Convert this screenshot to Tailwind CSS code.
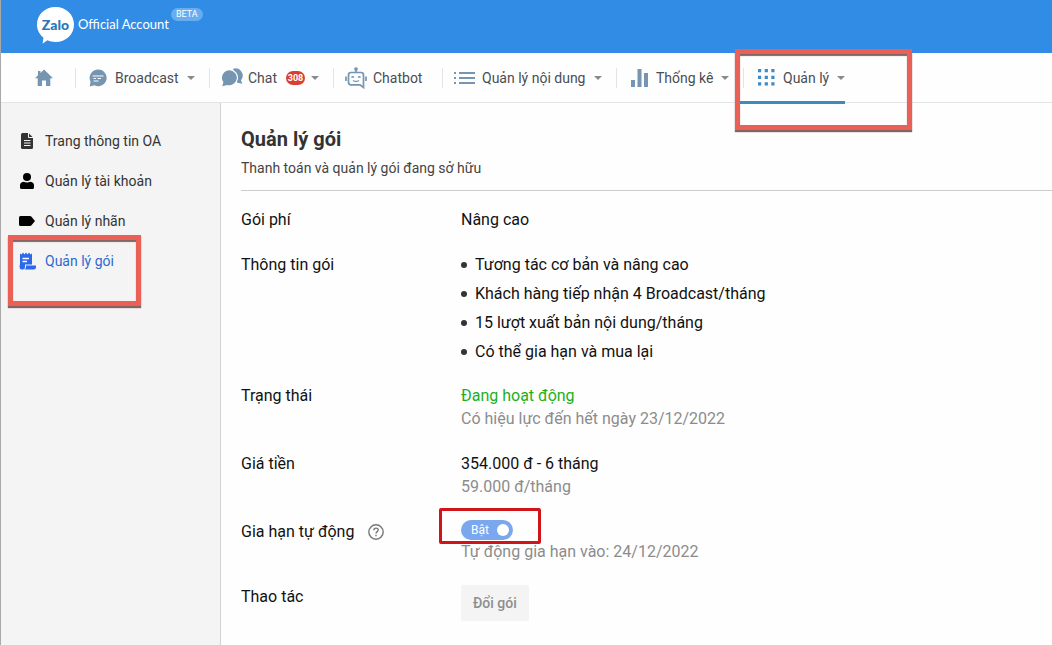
<!DOCTYPE html>
<html lang="vi">
<head>
  <meta charset="UTF-8" />
  <meta name="viewport" content="width=device-width, initial-scale=1.0"/>
  <title>Quản lý gói - Zalo Official Account</title>
  <script src="https://cdn.jsdelivr.net/npm/@tailwindcss/browser@4"></script>
</head>
<body class="relative flex flex-col min-h-screen overflow-x-hidden bg-[#fefefe] border-l border-[#a9a9a9] font-['Roboto',sans-serif] text-sm text-[#4a4d52]">

  <!-- Header -->
  <header class="flex items-start h-[53px] pl-9 pt-1.5 bg-[#308ce4] text-white">
    <a href="#" class="flex items-start" aria-label="Zalo Official Account">
      <svg class="w-[38px] h-[38px]" viewBox="0 0 38 38">
        <path d="M18.500 1C29 1 37 8.500 37 18.500S29 36 18.500 36C15.500 36 12.800 35.400 10.400 34.300L5.500 37.800 6.500 31.700C2.500 28.500 0 24 0 18.500 0 8.500 8 1 18.500 1Z" fill="#fff"/>
        <text x="18.500" y="24" text-anchor="middle" font-family="Lato, sans-serif" font-weight="900" font-size="14" fill="#2c76b8">Zalo</text>
      </svg>
      <span class="ml-[3px] mt-2 font-['Lato',sans-serif] text-[13px] leading-5">Official Account</span>
    </a>
    <span class="ml-0.5 mt-0.5 px-[5px] h-[13px] rounded-full bg-[#67adf0] text-[9px] leading-[13px]">BETA</span>
  </header>

  <!-- Top menu -->
  <nav class="flex items-center h-[50px] shrink-0 border-b border-[#e2e4e6] text-[#4a4d52]">
    <a href="#" aria-label="Trang chủ" class="flex items-center w-[74px] shrink-0 pl-[34px]">
      <svg class="w-[18px] h-[18px]" viewBox="0 0 18 18" fill="#7595b0"><path d="M9 .500 18 9.200H15.300V17H11V11.500H7V17H2.700V9.200H0L3 6.200V2H5.500V3.900Z"/></svg>
    </a>
    <button class="flex items-center w-[134px] h-5 shrink-0 border-l border-[#e2e4e6] pl-[13px]">
      <svg class="w-[18px] h-[18px] mr-2" viewBox="0 0 18 18"><path d="M9.200 .500A8.500 8.300 0 1 1 5.500 16.300L.800 17.500 1.500 12.500A8.500 8.300 0 0 1 9.200 .500Z" fill="#7595b0"/><path d="M3.500 7H14.500M4.500 9.500H7M8.500 9.500H12M4.500 12H9.500" stroke="#fff" stroke-width="1.200"/></svg>
      <span>Broadcast</span>
      <span class="ml-auto mr-3.5 border-x-4 border-x-transparent border-t-4 border-t-[#878b90]"></span>
    </button>
    <button class="flex items-center w-[124px] h-5 shrink-0 border-l border-[#e2e4e6] pl-3">
      <svg class="w-[21px] h-[19px] mr-[5px]" viewBox="0 0 21 19" fill="#7595b0"><path d="M11 .800A7.300 7.300 0 0 1 19 12.300L20.300 15.800 15.300 14.800 13 8Z"/><path d="M7.800 2.200A7.800 7.500 0 1 1 5 16.900L.300 18.300 1.400 14A7.800 7.500 0 0 1 7.800 2.200Z" stroke="#fefefe" stroke-width="2.400" paint-order="stroke"/></svg>
      <span>Chat</span>
      <span class="ml-auto mr-1.5 w-[19px] h-3.5 rounded-full bg-[#d8412f] text-white text-[9px] leading-[14px] font-bold text-center">308</span>
      <span class="mr-3.5 border-x-4 border-x-transparent border-t-4 border-t-[#878b90]"></span>
    </button>
    <button class="flex items-center w-[109px] h-5 shrink-0 border-l border-[#e2e4e6] pl-[11px]">
      <svg class="w-[22px] h-[22px] mr-1.5" viewBox="0 0 22 22" fill="none" stroke="#7595b0" stroke-width="1.700"><path d="M6 5.500H16Q18.500 5.500 18.500 8V20.500L15 17.800H6Q3.500 17.800 3.500 15.300V8Q3.500 5.500 6 5.500ZM11 5.500V3M1 9.500V14M21 9.500V14"/><circle cx="11" cy="2" r="1" fill="#7595b0"/><path d="M6.500 10.500Q7.700 9 8.900 10.500M13.100 10.500Q14.300 9 15.500 10.500M8 13.500Q11 15.500 14 13.500" stroke-width="1.300"/></svg>
      <span>Chatbot</span>
    </button>
    <button class="flex items-center w-[174px] h-5 shrink-0 border-l border-[#e2e4e6] pl-[11px]">
      <svg class="w-[21px] h-3.5 mr-[7px]" viewBox="0 0 21 14" fill="#7595b0"><path d="M0 1H2V3H0ZM0 6H2V8H0ZM0 11H2V13H0ZM5 1H21V3H5ZM5 6H21V8H5ZM5 11H21V13H5Z"/></svg>
      <span>Quản lý nội dung</span>
      <span class="ml-auto mr-3.5 border-x-4 border-x-transparent border-t-4 border-t-[#878b90]"></span>
    </button>
    <button class="flex items-center w-[127px] h-5 shrink-0 border-l border-[#e2e4e6] pl-3.5">
      <svg class="w-[17px] h-[18px] mr-2" viewBox="0 0 17 18" fill="#7595b0"><path d="M0 11H4V18H0ZM6.500 0H10.500V18H6.500ZM13 4H17V18H13Z"/></svg>
      <span>Thống kê</span>
      <span class="ml-auto mr-3.5 border-x-4 border-x-transparent border-t-4 border-t-[#878b90]"></span>
    </button>
    <button class="relative flex items-center w-[102px] h-5 shrink-0 border-l border-[#e2e4e6] pl-3.5">
      <svg class="w-[17px] h-[17px] mr-2" viewBox="0 0 17 17" fill="#3d8cc8"><path d="M0 0H3.200V3.200H0ZM6.700 0H9.900V3.200H6.700ZM13.300 0H16.500V3.200H13.300ZM0 6.700H3.200V9.900H0ZM6.700 6.700H9.900V9.900H6.700ZM13.300 6.700H16.500V9.900H13.300ZM0 13.300H3.200V16.500H0ZM6.700 13.300H9.900V16.500H6.700ZM13.300 13.300H16.500V16.500H13.300Z"/></svg>
      <span>Quản lý</span>
      <span class="ml-auto border-x-4 border-x-transparent border-t-4 border-t-[#878b90]"></span>
      <span class="absolute -left-1 right-0 top-[33px] h-[3px] bg-[#3d8abf]"></span>
    </button>
  </nav>

  <div class="flex grow">
    <!-- Sidebar -->
    <aside class="w-[220px] shrink-0 pt-[18px] bg-[#f4f4f4] border-r border-[#d2d2d2] text-[#333]">
      <a href="#" class="flex items-center h-10 pl-[18px]">
        <svg class="w-4 h-4 mr-2.5" viewBox="0 0 16 16"><path d="M3.500 0H9.500L14 4.500V14.500Q14 16 12.500 16H3.500Q2 16 2 14.500V1.500Q2 0 3.500 0Z" fill="#333"/><path d="M9.500 0V4.500H14M5 7.500H11.500M5 10H11.500M5 12.500H11.500" stroke="#f4f4f4" fill="none"/></svg>
        Trang thông tin OA
      </a>
      <a href="#" class="flex items-center h-10 pl-[18px]">
        <svg class="w-4 h-4 mr-2.5" viewBox="0 0 16 16"><circle cx="8" cy="4" r="4"/><path d="M4.500 8.800Q8 10.300 11.500 8.800 15 9.200 15 12.500V14.500Q15 16 13.500 16H2.500Q1 16 1 14.500V12.500Q1 9.200 4.500 8.800Z"/></svg>
        Quản lý tài khoản
      </a>
      <a href="#" class="flex items-center h-10 pl-[18px]">
        <svg class="w-4 h-4 mr-2.5" viewBox="0 0 16 16"><path d="M1.500 3H11Q12 3 12.500 3.700L16 8 12.500 12.300Q12 13 11 13H1.500Q0 13 0 11.500V4.500Q0 3 1.500 3Z"/></svg>
        Quản lý nhãn
      </a>
      <a href="#" class="flex items-center h-10 pl-[18px] text-[#2d69d2]">
        <svg class="w-[18px] h-[18px] mr-2" viewBox="0 0 18 18"><path d="M1 1.500 2.500 2.500 4 .500 5.500 2.500 7 .500 8.500 2.500 10 .500 11.500 2.500 13 1.500V12.500H6V15Q6 17.500 3.500 17.500H2.500Q.500 17 .500 14.500L1 12Z" fill="#2b68ec"/><path d="M7 13.500H17V15Q17 17.500 14.500 17.500H5.500Q7 16.500 7 15Z" fill="#2b68ec"/><path d="M3.500 6.500H10M3.500 9.500H8" stroke="#fff" stroke-width="1.300"/></svg>
        Quản lý gói
      </a>
    </aside>

    <!-- Main -->
    <main class="grow pl-5 pt-6 text-base leading-[23px] text-[#111]">
      <h1 class="text-xl leading-6 font-bold text-[#333]">Quản lý gói</h1>
      <p class="mt-[7px] pb-3 text-sm leading-5 text-[#444] border-b border-[#ccc]">Thanh toán và quản lý gói đang sở hữu</p>

      <dl class="mt-[17px] grid grid-cols-[220px_1fr] gap-y-[22px]">
        <dt>Gói phí</dt>
        <dd>Nâng cao</dd>

        <dt>Thông tin gói</dt>
        <dd>
          <ul class="flex flex-col gap-1.5 -mb-px">
            <li class="flex items-center gap-2"><span class="w-1.5 h-1.5 rounded-full bg-[#333]"></span>Tương tác cơ bản và nâng cao</li>
            <li class="flex items-center gap-2"><span class="w-1.5 h-1.5 rounded-full bg-[#333]"></span>Khách hàng tiếp nhận 4 Broadcast/tháng</li>
            <li class="flex items-center gap-2"><span class="w-1.5 h-1.5 rounded-full bg-[#333]"></span>15 lượt xuất bản nội dung/tháng</li>
            <li class="flex items-center gap-2"><span class="w-1.5 h-1.5 rounded-full bg-[#333]"></span>Có thể gia hạn và mua lại</li>
          </ul>
        </dd>

        <dt>Trạng thái</dt>
        <dd>
          <p class="text-[#1cb01c]">Đang hoạt động</p>
          <p class="text-[#8c8c8c]">Có hiệu lực đến hết ngày 23/12/2022</p>
        </dd>

        <dt>Giá tiền</dt>
        <dd>
          <p>354.000 đ - 6 tháng</p>
          <p class="text-[#8c8c8c]">59.000 đ/tháng</p>
        </dd>

        <dt class="flex items-start">
          <label for="renew">Gia hạn tự động</label>
          <svg class="ml-3.5 mt-1 w-4 h-4" viewBox="0 0 16 16" fill="none" stroke="#777" stroke-width="1.400"><circle cx="8" cy="8" r="7.200"/><path d="M5.800 6.300Q5.800 4.100 8 4.100T10.200 6.100C10.200 7.600 8 7.700 8 9.500M8 10.800V12.200"/></svg>
        </dt>
        <dd>
          <div class="relative w-[52px] h-5">
            <input id="renew" type="checkbox" checked class="block appearance-none w-full h-full rounded-full bg-[#7aa7ee]">
            <span class="absolute left-2.5 top-0 text-xs leading-5 text-white pointer-events-none">Bật</span>
            <span class="absolute right-1 top-1 w-3 h-3 rounded-full bg-white pointer-events-none"></span>
            <!-- Callout around the switch -->
            <div class="absolute -left-[22px] -top-3 w-[102px] h-9 border-3 border-[#d0141a] rounded-xs pointer-events-none"></div>
          </div>
          <p class="text-[#8c8c8c]">Tự động gia hạn vào: 24/12/2022</p>
        </dd>

        <dt>Thao tác</dt>
        <dd><button class="h-9 px-3 rounded-xs bg-[#f4f4f4] text-sm font-medium text-[#8e8e8e]">Đổi gói</button></dd>
      </dl>
    </main>
  </div>

  <!-- Callouts -->
  <div class="absolute left-[734px] top-[49px] w-[177px] h-[81px] border-[5px] border-[#ea5f56] shadow-[0_2px_1px_#806562,inset_0_2px_1px_#806562] pointer-events-none"></div>
  <div class="absolute left-[7px] top-[235px] w-[133px] h-[71px] border-[5px] border-[#ea5f56] shadow-[0_2px_1px_#806562,inset_0_2px_1px_#806562] pointer-events-none"></div>

</body>
</html>
